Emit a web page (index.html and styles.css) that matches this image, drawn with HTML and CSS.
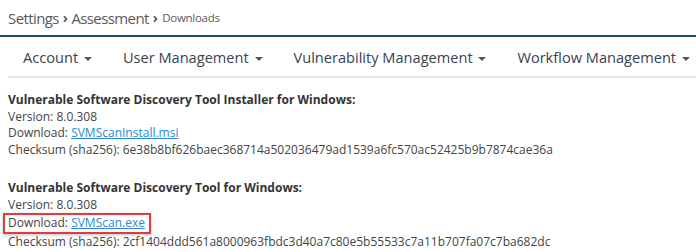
FILE: index.html
```html
<!DOCTYPE html>
<html lang="en">
<head>
    <meta charset="UTF-8">
    <title>Downloads</title>
    <link rel="stylesheet" href="styles.css">
</head>
<body>
    <div class="breadcrumb">
        <span class="crumb">Settings</span>
        <span class="sep">&rsaquo;</span>
        <span class="crumb">Assessment</span>
        <span class="sep">&rsaquo;</span>
        <span class="crumb current">Downloads</span>
    </div>

    <ul class="nav">
        <li>Account <span class="caret"></span></li>
        <li>User Management <span class="caret"></span></li>
        <li>Vulnerability Management <span class="caret"></span></li>
        <li>Workflow Management <span class="caret"></span></li>
    </ul>

    <div class="content">
        <div class="download">
            <div class="title">Vulnerable Software Discovery Tool Installer for Windows:</div>
            <div>Version: 8.0.308</div>
            <div>Download: <a href="#">SVMScanInstall.msi</a></div>
            <div>Checksum (sha256): 6e38b8bf626baec368714a502036479ad1539a6fc570ac52425b9b7874cae36a</div>
        </div>

        <div class="download">
            <div class="title">Vulnerable Software Discovery Tool for Windows:</div>
            <div>Version: 8.0.308</div>
            <div class="highlight">Download: <a href="#">SVMScan.exe</a></div>
            <div>Checksum (sha256): 2cf1404ddd561a8000963fbdc3d40a7c80e5b55533c7a11b707fa07c7ba682dc</div>
        </div>
    </div>
</body>
</html>
```

FILE: styles.css
```css
body {
    margin: 0;
    font-family: 'Open Sans', sans-serif;
    color: #444;
    background: #fff;
    overflow: hidden;
}
.breadcrumb {
    height: 35px;
    padding-left: 8px;
    display: flex;
    align-items: center;
    border-bottom: 2px solid #1f4b6e;
    color: #5a5a5a;
    font-size: 15px;
    letter-spacing: -0.6px;
}
.breadcrumb .sep {
    margin: 0 4px;
    font-weight: bold;
    font-size: 14px;
}
.breadcrumb .current {
    font-size: 11.5px;
    letter-spacing: -0.3px;
    margin-left: 1px;
}
.nav {
    list-style: none;
    margin: 0 0 0 8px;
    padding: 0;
    height: 39px;
    display: flex;
    align-items: center;
    border-bottom: 2px solid #e5e5e5;
}
.nav li {
    flex-shrink: 0;
    white-space: nowrap;
    padding: 0 15px;
    font-size: 14.6px;
    color: #3a4250;
    margin-right: 1px;
}
.caret {
    display: inline-block;
    width: 0;
    height: 0;
    margin-left: 2px;
    vertical-align: middle;
    border-top: 4px solid #555;
    border-left: 4px solid transparent;
    border-right: 4px solid transparent;
}
.content {
    padding: 14px 8px 0;
    font-size: 12px;
    line-height: 16.7px;
}
.download {
    margin-bottom: 21px;
}
.title {
    font-weight: bold;
    color: #333;
}
.content a {
    color: #2b8ad8;
}
.highlight {
    display: inline-block;
    margin-left: -5px;
    padding: 0 4px 0 3px;
    border: 2px solid #e8383d;
    box-shadow: 0 1px 3px rgba(0, 0, 0, 0.25);
}
```
